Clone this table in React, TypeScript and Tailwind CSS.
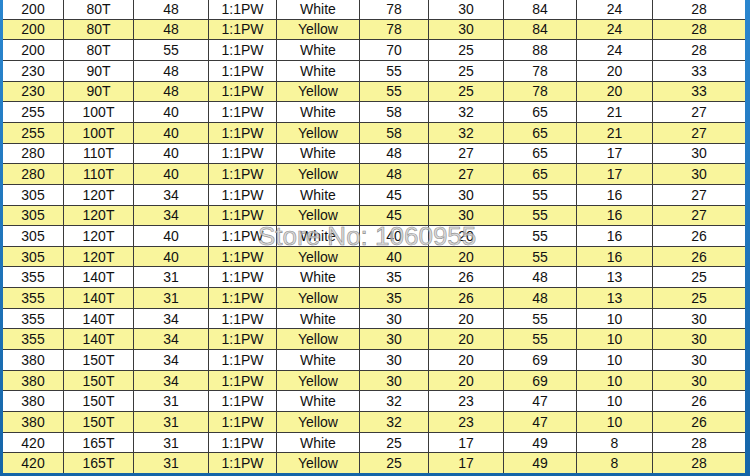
import React from 'react';

// each row: voltage, teeth, width, ratio, colour, then five sizes
const rows: string[][] = [
  ['200', '80T', '48', '1:1PW', 'White', '78', '30', '84', '24', '28'],
  ['200', '80T', '48', '1:1PW', 'Yellow', '78', '30', '84', '24', '28'],
  ['200', '80T', '55', '1:1PW', 'White', '70', '25', '88', '24', '28'],
  ['230', '90T', '48', '1:1PW', 'White', '55', '25', '78', '20', '33'],
  ['230', '90T', '48', '1:1PW', 'Yellow', '55', '25', '78', '20', '33'],
  ['255', '100T', '40', '1:1PW', 'White', '58', '32', '65', '21', '27'],
  ['255', '100T', '40', '1:1PW', 'Yellow', '58', '32', '65', '21', '27'],
  ['280', '110T', '40', '1:1PW', 'White', '48', '27', '65', '17', '30'],
  ['280', '110T', '40', '1:1PW', 'Yellow', '48', '27', '65', '17', '30'],
  ['305', '120T', '34', '1:1PW', 'White', '45', '30', '55', '16', '27'],
  ['305', '120T', '34', '1:1PW', 'Yellow', '45', '30', '55', '16', '27'],
  ['305', '120T', '40', '1:1PW', 'White', '40', '20', '55', '16', '26'],
  ['305', '120T', '40', '1:1PW', 'Yellow', '40', '20', '55', '16', '26'],
  ['355', '140T', '31', '1:1PW', 'White', '35', '26', '48', '13', '25'],
  ['355', '140T', '31', '1:1PW', 'Yellow', '35', '26', '48', '13', '25'],
  ['355', '140T', '34', '1:1PW', 'White', '30', '20', '55', '10', '30'],
  ['355', '140T', '34', '1:1PW', 'Yellow', '30', '20', '55', '10', '30'],
  ['380', '150T', '34', '1:1PW', 'White', '30', '20', '69', '10', '30'],
  ['380', '150T', '34', '1:1PW', 'Yellow', '30', '20', '69', '10', '30'],
  ['380', '150T', '31', '1:1PW', 'White', '32', '23', '47', '10', '26'],
  ['380', '150T', '31', '1:1PW', 'Yellow', '32', '23', '47', '10', '26'],
  ['420', '165T', '31', '1:1PW', 'White', '25', '17', '49', '8', '28'],
  ['420', '165T', '31', '1:1PW', 'Yellow', '25', '17', '49', '8', '28'],
];

export default function App() {
  return (
    <div className="relative w-[750px] h-[476px] overflow-hidden bg-gradient-to-b from-[#2a86cf] to-[#1565a8] pl-[3px] pr-[5px] font-['Liberation_Sans',Arial,sans-serif]">
      <div className="-mt-px grid h-[474px] grid-cols-[60px_69px_74px_67px_82px_68px_74px_72px_75px_92px] grid-rows-[repeat(23,minmax(0,1fr))] gap-px bg-[#3a3a3a]">
        {rows.map((row, i) => {
          const yellow = row[4] === 'Yellow';
          return row.map((cell, j) => (
            <div
              key={`${i}-${j}`}
              className={`flex items-center justify-center text-[14px] leading-none text-[#111] ${
                yellow ? 'bg-[#f9f59c]' : 'bg-white'
              }`}
            >
              {cell}
            </div>
          ));
        })}
      </div>

      {/* watermark over the table */}
      <div className="pointer-events-none absolute left-[258px] top-[223px] text-[26px] leading-none text-[#d0d0d0]/75 [-webkit-text-stroke:0.6px_#8f8f8f]">
        Store No: 1060955
      </div>
    </div>
  );
}
